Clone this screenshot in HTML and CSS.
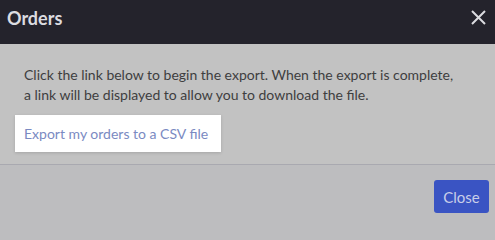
FILE: index.html
```html
<!DOCTYPE html>
<html>
<head>
<meta charset="utf-8">
<link rel="stylesheet" href="styles.css">
</head>
<body>
<div class="modal">
  <div class="modal-header">
    <h1 class="modal-title">Orders</h1>
    <button class="close-x" aria-label="Close">
      <svg width="15" height="15" viewBox="0 0 15 15"><path d="M1 1L14 14M14 1L1 14" stroke="#dcdce0" stroke-width="2" fill="none"/></svg>
    </button>
  </div>
  <div class="modal-body">
    <p class="intro">Click the link below to begin the export. When the export is complete,<br>a link will be displayed to allow you to download the file.</p>
    <div class="link-box"><a href="#" class="export-link">Export my orders to a CSV file</a></div>
  </div>
  <div class="modal-footer">
    <button class="btn-close">Close</button>
  </div>
</div>
</body>
</html>
```
FILE: styles.css
```css
html, body { margin: 0; padding: 0; }
body { width: 495px; height: 218px; overflow: hidden; font-family: Lato, "Open Sans", sans-serif; background: #bdbdbf; }
.modal { display: flex; flex-direction: column; height: 218px; }
.modal-header { height: 44px; background: #24232c; display: flex; align-items: center; justify-content: space-between; padding: 0 9px 0 7px; box-sizing: border-box; }
.modal-title { margin: -9px 0 0 0; font-size: 18px; font-weight: 700; color: #dcdce0; }
.close-x { background: none; border: 0; padding: 0; width: 15px; height: 15px; display: flex; margin-top: -10px; }
.modal-body { background: #c2c2c2; padding: 21px 15px 12px 15px; border-bottom: 1px solid #a9a9b0; }
.intro { margin: 0 0 0 9px; font-size: 14px; line-height: 20px; color: #3e3e40; white-space: nowrap; }
.link-box { display: inline-block; margin-top: 10px; background: #fff; padding: 8px 13px 9px 9px; box-shadow: 0 1px 3px rgba(0,0,0,0.15); }
.export-link { font-size: 14px; line-height: 19px; color: #7a8ac2; text-decoration: none; }
.modal-footer { flex: 1; display: flex; justify-content: flex-end; align-items: flex-start; padding: 15px 6px 0 0; }
.btn-close { background: #3a54c3; border: 0; border-radius: 3px; width: 55px; height: 33px; color: #c9cee9; font-family: inherit; font-size: 15px; padding: 0; }
```
